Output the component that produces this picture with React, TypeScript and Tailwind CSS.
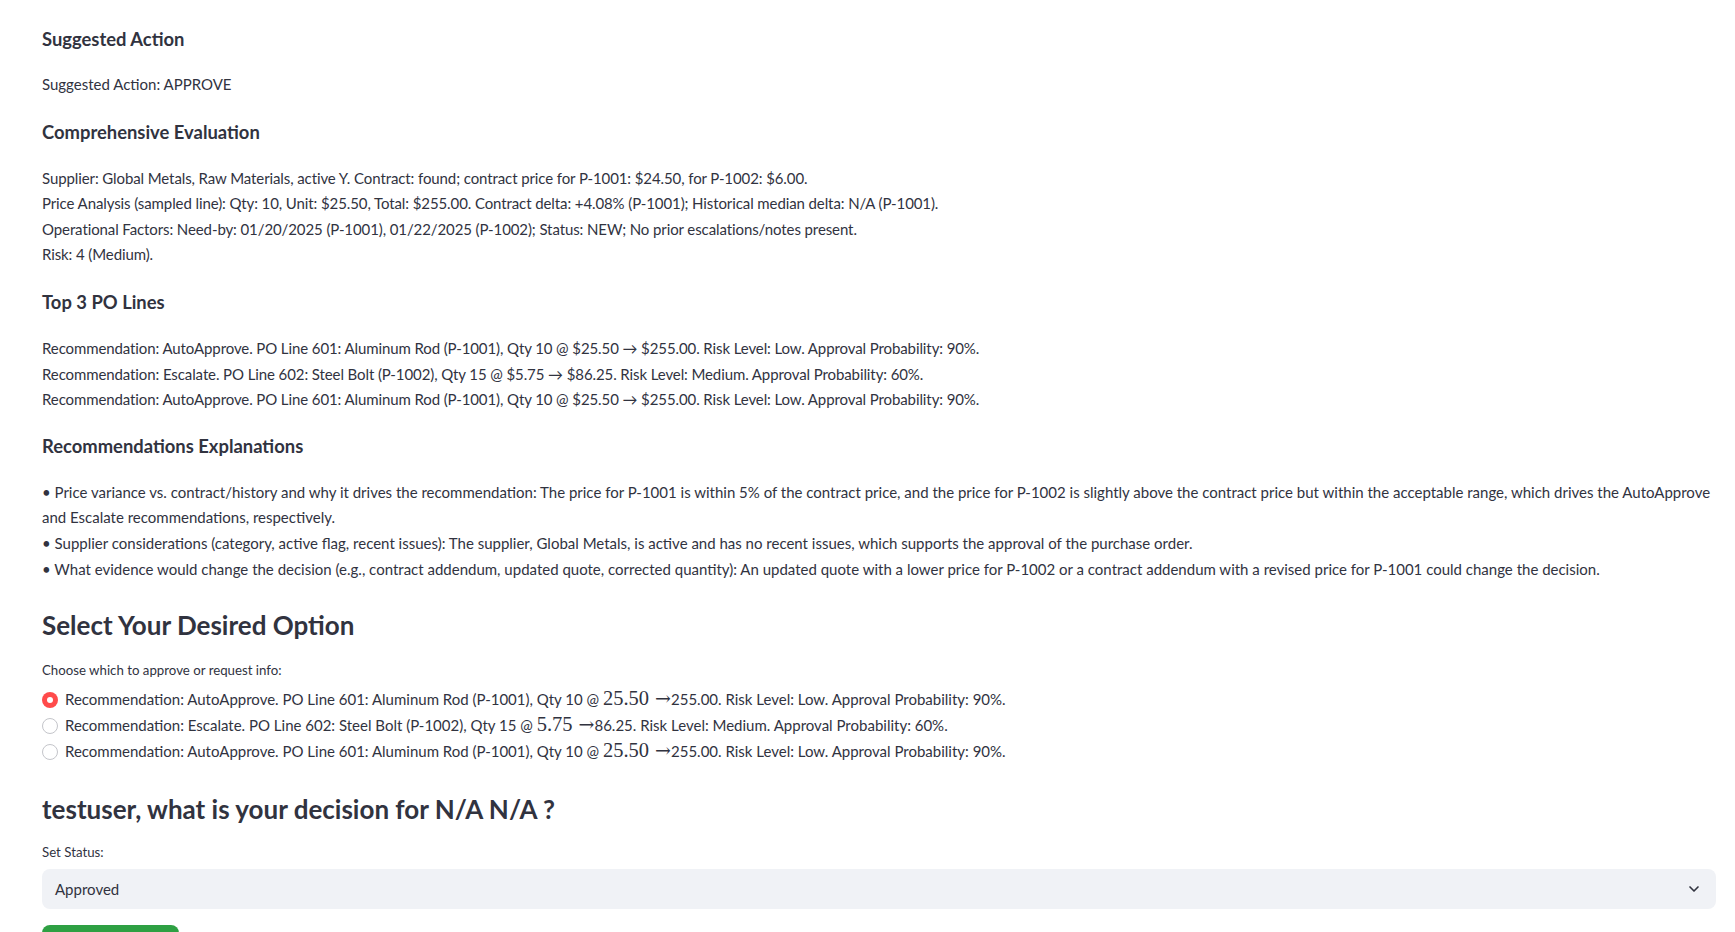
import { ChevronDown } from 'lucide-react'

const ink = 'text-[#31333f]'

function Heading4({ children, className = '' }: { children: React.ReactNode; className?: string }) {
  return <h4 className={`text-[18.4px] font-bold leading-[24px] ${ink} ${className}`}>{children}</h4>
}

function Heading3({ children, className = '' }: { children: React.ReactNode; className?: string }) {
  return <h3 className={`text-[26px] font-bold leading-[33.6px] ${ink} ${className}`}>{children}</h3>
}

function Radio({ checked }: { checked: boolean }) {
  if (checked) {
    return (
      <span className="grid h-4 w-4 shrink-0 place-items-center rounded-full bg-[#ff4b4b]">
        <span className="h-[6px] w-[6px] rounded-full bg-white" />
      </span>
    )
  }
  return <span className="h-4 w-4 shrink-0 rounded-full border border-[#c4c5ca] bg-white" />
}

// inline math bit (unit price + arrow) rendered like KaTeX
function Tex({ value }: { value: string }) {
  return (
    <>
      <span className="font-['Liberation_Serif',serif] text-[20.5px] leading-none">{value}</span>
      <span className="ml-[6px] font-['DejaVu_Serif',serif] text-[19px] font-light leading-none">→</span>
    </>
  )
}

const options = [
  {
    head: 'Recommendation: AutoApprove. PO Line 601: Aluminum Rod (P-1001), Qty 10 @ ',
    unit: '25.50',
    tail: '255.00. Risk Level: Low. Approval Probability: 90%.',
  },
  {
    head: 'Recommendation: Escalate. PO Line 602: Steel Bolt (P-1002), Qty 15 @ ',
    unit: '5.75',
    tail: '86.25. Risk Level: Medium. Approval Probability: 60%.',
  },
  {
    head: 'Recommendation: AutoApprove. PO Line 601: Aluminum Rod (P-1001), Qty 10 @ ',
    unit: '25.50',
    tail: '255.00. Risk Level: Low. Approval Probability: 90%.',
  },
]

export default function App() {
  return (
    <div className={`min-h-screen bg-white pl-[42px] pr-[19px] font-['Lato',sans-serif] ${ink}`}>
      <div className="flex flex-col text-[15px] leading-[25.6px]">
        <Heading4 className="mt-[27px]">Suggested Action</Heading4>
        <p className="mt-[21px]">Suggested Action: APPROVE</p>

        <Heading4 className="mt-[22px]">Comprehensive Evaluation</Heading4>
        <div className="mt-[22px] tracking-[-0.1px]">
          <p>Supplier: Global Metals, Raw Materials, active Y. Contract: found; contract price for P-1001: $24.50, for P-1002: $6.00.</p>
          <p>Price Analysis (sampled line): Qty: 10, Unit: $25.50, Total: $255.00. Contract delta: +4.08% (P-1001); Historical median delta: N/A (P-1001).</p>
          <p>Operational Factors: Need-by: 01/20/2025 (P-1001), 01/22/2025 (P-1002); Status: NEW; No prior escalations/notes present.</p>
          <p>Risk: 4 (Medium).</p>
        </div>

        <Heading4 className="mt-[22px]">Top 3 PO Lines</Heading4>
        <div className="mt-[22px] tracking-[-0.1px]">
          <p>Recommendation: AutoApprove. PO Line 601: Aluminum Rod (P-1001), Qty 10 @ $25.50 → $255.00. Risk Level: Low. Approval Probability: 90%.</p>
          <p>Recommendation: Escalate. PO Line 602: Steel Bolt (P-1002), Qty 15 @ $5.75 → $86.25. Risk Level: Medium. Approval Probability: 60%.</p>
          <p>Recommendation: AutoApprove. PO Line 601: Aluminum Rod (P-1001), Qty 10 @ $25.50 → $255.00. Risk Level: Low. Approval Probability: 90%.</p>
        </div>

        <Heading4 className="mt-[21px]">Recommendations Explanations</Heading4>
        <div className="mt-[22px]">
          <p>
            • Price variance vs. contract/history and why it drives the recommendation: The price for P-1001 is within 5% of the contract price, and the price for P-1002 is slightly above the contract price but within the acceptable range, which drives the AutoApprove and Escalate recommendations, respectively.
          </p>
          <p>
            • Supplier considerations (category, active flag, recent issues): The supplier, Global Metals, is active and has no recent issues, which supports the approval of the purchase order.
          </p>
          <p>
            • What evidence would change the decision (e.g., contract addendum, updated quote, corrected quantity): An updated quote with a lower price for P-1002 or a contract addendum with a revised price for P-1001 could change the decision.
          </p>
        </div>

        <Heading3 className="mt-[27px]">Select Your Desired Option</Heading3>
        <label className="mt-[17px] text-[13.25px] leading-[21px]">Choose which to approve or request info:</label>
        <div className="mt-[6px] flex flex-col">
          {options.map((o, i) => (
            <div key={i} className="flex h-[26px] items-center gap-[7px] text-[15px]">
              <Radio checked={i === 0} />
              <span className="whitespace-nowrap">
                {o.head}
                <Tex value={o.unit} />
                {o.tail}
              </span>
            </div>
          ))}
        </div>

        <Heading3 className="mt-[28px]">testuser, what is your decision for N/A N/A ?</Heading3>
        <label className="mt-[16px] text-[13.25px] leading-[21px]">Set Status:</label>
        <div className="mt-[6px] flex h-10 items-center justify-between rounded-lg bg-[#f0f2f6] pl-[13px] pr-[14px]">
          <span>Approved</span>
          <ChevronDown size={16} strokeWidth={2.5} className="text-[#31333f]" />
        </div>
        <button className="mt-4 h-10 w-[137px] rounded-lg bg-[#2ea043]" />
      </div>
    </div>
  )
}
